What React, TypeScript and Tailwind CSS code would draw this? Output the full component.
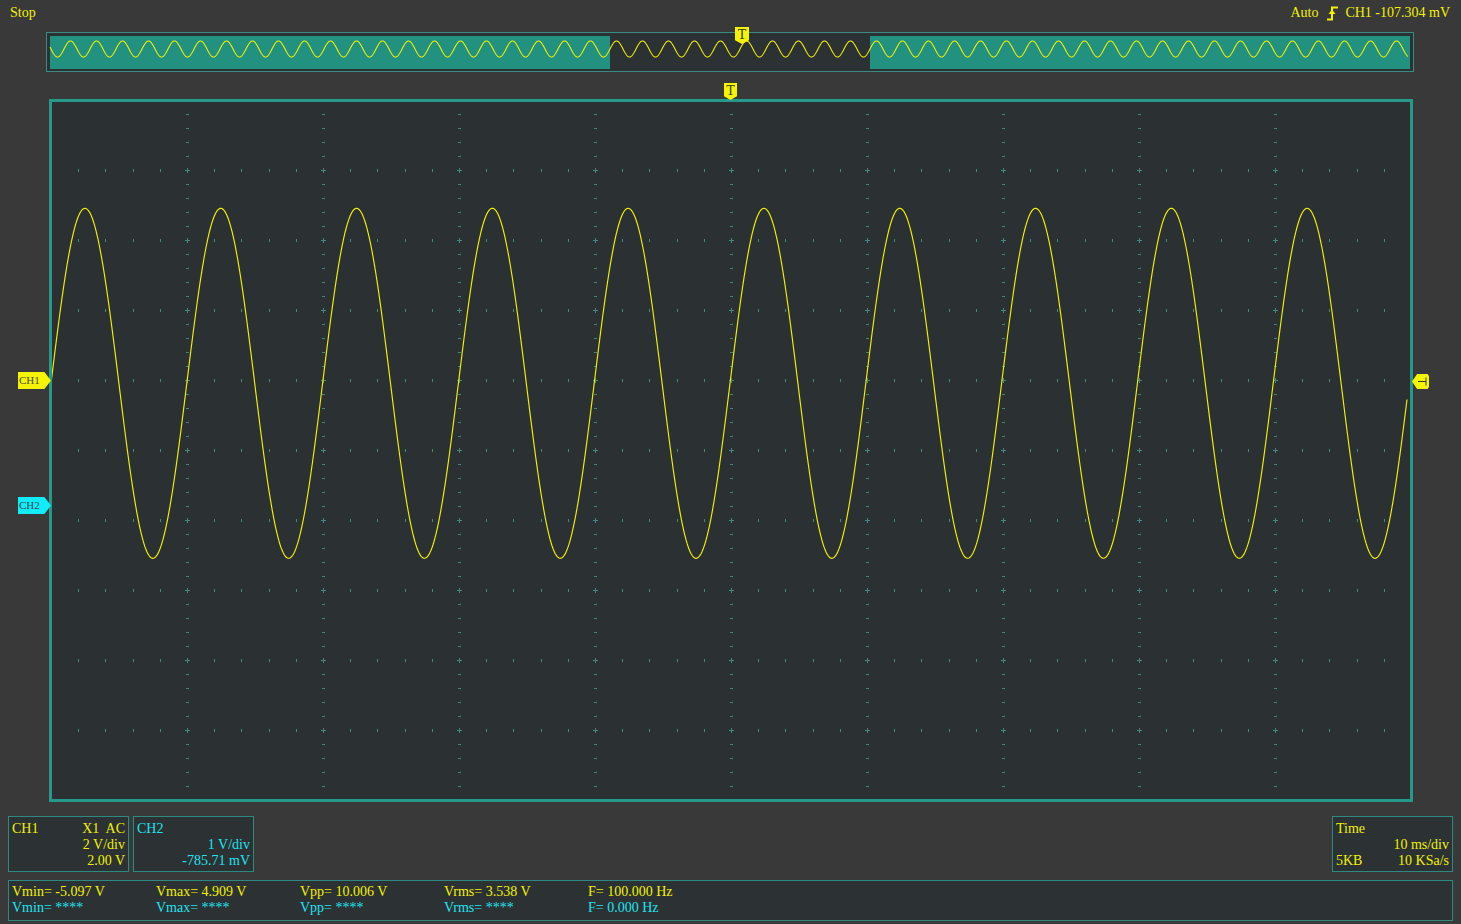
import React from "react";

const YEL = "#f2f200";

// main screen grid ticks (page coordinates)
const ticks: { x: number; y: number; w: number; h: number }[] = [];
for (let i = 1; i <= 9; i++) {
  const vx = 51 + 136 * i;
  for (let k = 1; k <= 49; k++) {
    const y = 100 + 14 * k;
    if (k % 5 === 0) {
      ticks.push({ x: vx - 2, y: y, w: 5, h: 1 });
      ticks.push({ x: vx, y: y - 2, w: 1, h: 5 });
    } else {
      ticks.push({ x: vx - 1, y: y, w: 3, h: 1 });
    }
  }
}
for (let j = 1; j <= 9; j++) {
  const hy = 100 + 70 * j;
  for (let k = 1; k <= 49; k++) {
    if (k % 5 === 0) continue;
    const x = Math.round(51 + 27.2 * k);
    ticks.push({ x: x, y: hy - 1, w: 1, h: 3 });
  }
}

const mainWave: string[] = [];
for (let x = 51; x <= 1407; x += 1) {
  const y = 383.3 - 175 * Math.sin((2 * Math.PI * (x - 51)) / 135.8);
  mainWave.push(`${x},${y.toFixed(2)}`);
}

const miniWave: string[] = [];
for (let x = 50; x <= 1408; x += 0.5) {
  const y = 49 - 8 * Math.sin((2 * Math.PI * (x - 610)) / 26);
  miniWave.push(`${x},${y.toFixed(2)}`);
}

const measures = [
  ["Vmin= -5.097 V", "Vmin= ****"],
  ["Vmax= 4.909 V", "Vmax= ****"],
  ["Vpp= 10.006 V", "Vpp= ****"],
  ["Vrms= 3.538 V", "Vrms= ****"],
  ["F= 100.000 Hz", "F= 0.000 Hz"],
];

const EdgeIcon = () => (
  <svg width="12" height="15" viewBox="0 0 12 15" className="block">
    <path d="M0 13.5 H5 V1.5 H11" stroke={YEL} strokeWidth="2" fill="none" />
    <path d="M1.5 8 L5 3.5 L8.5 8 Z" fill={YEL} />
  </svg>
);

export default function App() {
  return (
    <div className="relative h-[924px] w-[1461px] overflow-hidden bg-[#393939] font-['Liberation_Serif',serif] text-[14px] leading-[16px]">
      {/* Header */}
      <div className="flex h-[26px] items-center justify-between pl-[10px] pr-[11px] text-[#f2f200]">
        <span>Stop</span>
        <div className="flex items-center">
          <span>Auto</span>
          <span className="ml-[9px] mr-[6px]">
            <EdgeIcon />
          </span>
          <span>CH1 -107.304 mV</span>
        </div>
      </div>

      {/* Overview */}
      <div className="ml-[46px] mt-[6px] h-[40px] w-[1368px] border border-[#3a8c82] bg-[#2c3133]">
        <svg width="1366" height="38" viewBox="47 33 1366 38" className="block">
          <rect x="50" y="36" width="1360" height="33" fill="#23917f" />
          <rect x="610" y="36" width="260" height="33" fill="#2c3133" />
          <polyline points={miniWave.join(" ")} fill="none" stroke={YEL} strokeWidth="1.1" />
        </svg>
      </div>

      {/* Main screen */}
      <div className="ml-[49px] mt-[27px] h-[703px] w-[1364px] border-[3px] border-[#27998a] bg-[#2b3133]">
        <svg width="1358" height="697" viewBox="52 102 1358 697" className="block">
          <g fill="#47857f" shapeRendering="crispEdges">
            {ticks.map((t, i) => (
              <rect key={i} x={t.x} y={t.y} width={t.w} height={t.h} />
            ))}
          </g>
          <polyline points={mainWave.join(" ")} fill="none" stroke={YEL} strokeWidth="1.15" />
        </svg>
      </div>

      {/* Bottom channel panels */}
      <div className="mt-[14px] flex px-[8px]">
        <div className="h-[56px] w-[121px] border border-[#2e8a80] bg-[#2c3133] px-[3px] pt-[4px] text-[#f2f200]">
          <div className="flex justify-between">
            <span>CH1</span>
            <span className="whitespace-pre">X1  AC</span>
          </div>
          <div className="text-right">2 V/div</div>
          <div className="text-right">2.00 V</div>
        </div>
        <div className="ml-[4px] h-[56px] w-[121px] border border-[#2e8a80] bg-[#2c3133] px-[3px] pt-[4px] text-[#20e4f0]">
          <div>CH2</div>
          <div className="text-right">1 V/div</div>
          <div className="text-right">-785.71 mV</div>
        </div>
        <div className="flex-1" />
        <div className="h-[56px] w-[121px] border border-[#2e8a80] bg-[#2c3133] px-[3px] pt-[4px] text-[#f2f200]">
          <div>Time</div>
          <div className="text-right">10 ms/div</div>
          <div className="flex justify-between">
            <span>5KB</span>
            <span>10 KSa/s</span>
          </div>
        </div>
      </div>

      {/* Measurements */}
      <div className="ml-[8px] mt-[8px] h-[41px] w-[1445px] border border-[#2e8a80] bg-[#2c3133] pl-[3px] pt-[3px]">
        <div className="flex">
          {measures.map((m) => (
            <div key={m[0]} className="w-[144px]">
              <div className="text-[#f2f200]">{m[0]}</div>
              <div className="text-[#20e4f0]">{m[1]}</div>
            </div>
          ))}
        </div>
      </div>

      {/* Markers */}
      <div className="absolute left-[735px] top-[27px] flex h-[17px] w-[14px] justify-center bg-[#f5f500] text-[14px] leading-[15px] text-[#3a3a20] [clip-path:polygon(0_0,100%_0,100%_78%,50%_100%,0_78%)]">
        T
      </div>
      <div className="absolute left-[724px] top-[83px] flex h-[17px] w-[13px] justify-center bg-[#f5f500] text-[14px] leading-[15px] text-[#3a3a20] [clip-path:polygon(0_0,100%_0,100%_78%,50%_100%,0_78%)]">
        T
      </div>
      <div className="absolute left-[18px] top-[372px] h-[17px] w-[33px] bg-[#f5f500] pl-[1px] text-[11px] leading-[17px] text-[#4a4a2a] [clip-path:polygon(0_0,80%_0,100%_50%,80%_100%,0_100%)]">
        CH1
      </div>
      <div className="absolute left-[18px] top-[497px] h-[17px] w-[33px] bg-[#10ecfa] pl-[1px] text-[11px] leading-[17px] text-[#2a4a50] [clip-path:polygon(0_0,80%_0,100%_50%,80%_100%,0_100%)]">
        CH2
      </div>
      <div className="absolute left-[1412px] top-[374px] h-[15px] w-[17px] bg-[#f5f500] [clip-path:polygon(0_50%,30%_0,92%_0,100%_15%,100%_85%,92%_100%,30%_100%)]">
        <svg width="17" height="15" viewBox="0 0 17 15" className="block">
          <path d="M6 7.5 H14 M14 3.5 V11.5" stroke="#3a3a20" strokeWidth="1" fill="none" />
        </svg>
      </div>
    </div>
  );
}
